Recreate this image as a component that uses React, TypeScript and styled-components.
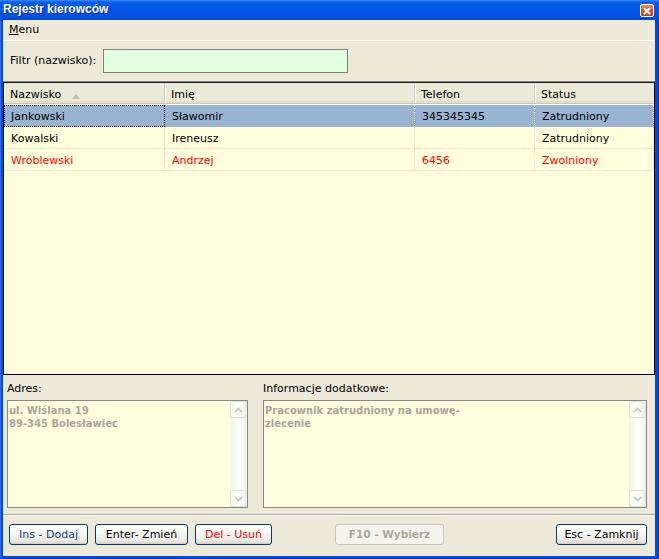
import React from 'react';
import styled, { createGlobalStyle } from 'styled-components';

const GlobalStyle = createGlobalStyle`
  html, body { margin: 0; padding: 0; background: #ece9d8; }
  body { font-family: "DejaVu Sans", Tahoma, sans-serif; font-size: 11px; color: #000; }
  * { box-sizing: border-box; }
`;

const Window = styled.div`
  width: 659px;
  height: 559px;
  display: flex;
  flex-direction: column;
  background: #0a48dc;
  box-shadow: inset 1px 0 0 #2a6cf0, inset -1px 0 0 #0831b0, inset 0 -1px 0 #0831b0;
  overflow: hidden;
`;

const TitleBar = styled.div`
  height: 20px;
  flex: none;
  display: flex;
  align-items: flex-start;
  justify-content: space-between;
  padding: 0 5px 0 3px;
  background: linear-gradient(180deg, #3d8ef8 0px, #0a5ee9 2px, #0055e5 40%, #0052e0 80%, #0046cc 100%);
`;

const TitleText = styled.span`
  padding-top: 2px;
  line-height: 18px;
  color: #fff;
  font: bold 12px "Liberation Sans", Arial, sans-serif;
  text-shadow: 1px 1px 0 #0b2a8c;
`;

const CloseButton = styled.div`
  margin-top: 4px;
  width: 14px;
  height: 13px;
  border: 1px solid #fff;
  border-radius: 2px;
  background: linear-gradient(180deg, #e98a64 0%, #d9552c 50%, #c2401a 100%);
  display: flex;
  align-items: center;
  justify-content: center;
`;

const Client = styled.div`
  flex: 1;
  margin: 0 4px 3px 3px;
  background: #ece9d8;
  display: flex;
  flex-direction: column;
  min-height: 0;
`;

const MenuBar = styled.div`
  height: 21px;
  flex: none;
  padding-left: 6px;
  line-height: 20px;
  border-bottom: 1px solid #fff;
`;

const Underline = styled.span`
  text-decoration: underline;
`;

const FilterRow = styled.div`
  height: 41px;
  flex: none;
  display: flex;
  align-items: center;
  padding: 0 0 0 7px;
  border-bottom: 1px solid #8e8b7c;
`;

const FilterLabel = styled.label`
  width: 93px;
  flex: none;
  line-height: 14px;
`;

const FilterInput = styled.div`
  width: 245px;
  height: 24px;
  margin-top: -1px;
  border: 1px solid #828282;
  background: #dfffdf;
`;

const Table = styled.div`
  height: 293px;
  flex: none;
  border: 1px solid #000;
  border-top-color: #1a1a1a;
  background: #ffffdd;
  display: grid;
  grid-template-columns: 161px 250px 120px 119px;
  grid-auto-rows: 22px;
  align-content: start;
`;

const HeaderCell = styled.div<{ $last?: boolean }>`
  height: 21px;
  padding: 4px 0 0 6px;
  line-height: 16px;
  background: #ebe9d8;
  border-bottom: 1px solid #cbc7b6;
  border-right: 1px solid ${p => (p.$last ? '#ebe9d8' : '#cdc9b9')};
  box-shadow: inset 1px 0 0 #fff, inset 0 -2px 0 #e2dec9;
  display: flex;
  align-items: flex-start;
  white-space: nowrap;
`;

const SortArrow = styled.svg`
  margin: 7px 0 0 11px;
`;

const Cell = styled.div<{ $selected?: boolean; $red?: boolean; $focus?: boolean }>`
  height: 22px;
  padding: 3px 0 0 7px;
  line-height: 18px;
  white-space: nowrap;
  overflow: hidden;
  color: ${p => (p.$red ? '#ff0000' : '#000')};
  background: ${p => (p.$selected ? '#99b4d1' : 'transparent')};
  border-bottom: 1px dotted ${p => (p.$selected ? '#99b4d1' : '#dcdac8')};
  border-right: 1px dotted ${p => (p.$selected ? '#ffffff' : '#dcdac8')};
  outline: ${p => (p.$focus ? '1px dotted #000' : 'none')};
  outline-offset: -1px;
`;

const BottomPanel = styled.div`
  flex: 1;
  display: flex;
  flex-direction: column;
`;

const Fields = styled.div`
  display: flex;
  padding: 0 8px 0 4px;
  gap: 15px;
`;

const Field = styled.div<{ $w: number }>`
  width: ${p => p.$w}px;
  display: flex;
  flex-direction: column;
`;

const FieldLabel = styled.div`
  height: 25px;
  padding-top: 7px;
  line-height: 14px;
`;

const Memo = styled.div`
  height: 108px;
  border: 1px solid #8a8a8a;
  background: #ffffdd;
  display: flex;
`;

const MemoText = styled.div`
  flex: 1;
  padding: 3px 0 0 1px;
  font: bold 10px "DejaVu Sans", Tahoma, sans-serif;
  line-height: 13px;
  color: #a8a69b;
  white-space: pre-wrap;
`;

const ScrollBar = styled.div`
  width: 17px;
  flex: none;
  display: flex;
  flex-direction: column;
  justify-content: space-between;
  background: linear-gradient(90deg, #f3f2ec 0%, #fefefb 50%, #f0efe7 100%);
`;

const ScrollButton = styled.div`
  width: 17px;
  height: 17px;
  border: 1px solid #e6e4d8;
  border-radius: 2px;
  background: linear-gradient(90deg, #f8f7f2 0%, #fdfdfb 50%, #efeee6 100%);
  display: flex;
  align-items: center;
  justify-content: center;
`;

const Separator = styled.div`
  margin-top: 6px;
  height: 2px;
  border-top: 1px solid #aca899;
  border-bottom: 1px solid #fff;
`;

const ButtonBar = styled.div`
  display: flex;
  align-items: flex-start;
  gap: 7px;
  padding: 8px 8px 0 6px;
`;

const Button = styled.button<{ $w: number; $color?: string; $gapLeft?: number }>`
  width: ${p => p.$w}px;
  height: 21px;
  margin-left: ${p => p.$gapLeft ?? 0}px;
  padding: 0;
  font: 11px "DejaVu Sans", Tahoma, sans-serif;
  line-height: 19px;
  color: ${p => p.$color ?? '#000'};
  border: 1px solid #003c74;
  border-radius: 3px;
  background: linear-gradient(180deg, #ffffff 0%, #f7f7f3 45%, #ecebe4 80%, #d8d4c8 100%);
  box-shadow: inset 0 -1px 0 #d6d0c4;
  &:disabled {
    color: #aca899;
    border-color: #c9c7ba;
    background: #f5f4ec;
    box-shadow: none;
    font-weight: bold;
    font-size: 10.5px;
  }
`;

const Spacer = styled.div`
  flex: 1;
`;

const Chevron = ({ up }: { up?: boolean }) => (
  <svg width="9" height="6" viewBox="0 0 9 6">
    <path d={up ? 'M1 5 L4.5 1.5 L8 5' : 'M1 1 L4.5 4.5 L8 1'} fill="none" stroke="#c4c2b6" strokeWidth="1.6" />
  </svg>
);

const MemoBox = ({ text }: { text: string }) => (
  <Memo>
    <MemoText>{text}</MemoText>
    <ScrollBar>
      <ScrollButton><Chevron up /></ScrollButton>
      <ScrollButton><Chevron /></ScrollButton>
    </ScrollBar>
  </Memo>
);

type Row = { nazwisko: string; imie: string; telefon: string; status: string; red?: boolean };

const rows: Row[] = [
  { nazwisko: 'Jankowski', imie: 'Sławomir', telefon: '345345345', status: 'Zatrudniony' },
  { nazwisko: 'Kowalski', imie: 'Ireneusz', telefon: '', status: 'Zatrudniony' },
  { nazwisko: 'Wróblewski', imie: 'Andrzej', telefon: '6456', status: 'Zwolniony', red: true },
];

export default function App() {
  return (
    <>
      <GlobalStyle />
      <Window>
        <TitleBar>
          <TitleText>Rejestr kierowców</TitleText>
          <CloseButton>
            <svg width="8" height="8" viewBox="0 0 8 8">
              <path d="M1 1 L7 7 M7 1 L1 7" stroke="#fff" strokeWidth="2" />
            </svg>
          </CloseButton>
        </TitleBar>
        <Client>
          <MenuBar>
            <Underline>M</Underline>enu
          </MenuBar>
          <FilterRow>
            <FilterLabel>Filtr (nazwisko):</FilterLabel>
            <FilterInput />
          </FilterRow>
          <Table>
            <HeaderCell>
              Nazwisko
              <SortArrow width="8" height="5" viewBox="0 0 8 5">
                <path d="M0 5 L4 0 L8 5 Z" fill="#bdbab0" />
              </SortArrow>
            </HeaderCell>
            <HeaderCell>Imię</HeaderCell>
            <HeaderCell>Telefon</HeaderCell>
            <HeaderCell $last>Status</HeaderCell>
            {rows.map((r, i) => {
              const sel = i === 0;
              return (
                <React.Fragment key={r.nazwisko}>
                  <Cell $selected={sel} $focus={sel} $red={r.red}>{r.nazwisko}</Cell>
                  <Cell $selected={sel} $red={r.red}>{r.imie}</Cell>
                  <Cell $selected={sel} $red={r.red}>{r.telefon}</Cell>
                  <Cell $selected={sel} $red={r.red}>{r.status}</Cell>
                </React.Fragment>
              );
            })}
          </Table>
          <BottomPanel>
            <Fields>
              <Field $w={241}>
                <FieldLabel>Adres:</FieldLabel>
                <MemoBox text={'ul. Wiślana 19\n89-345 Bolesławiec'} />
              </Field>
              <Field $w={384}>
                <FieldLabel>Informacje dodatkowe:</FieldLabel>
                <MemoBox text={'Pracownik zatrudniony na umowę-\nzlecenie'} />
              </Field>
            </Fields>
            <Separator />
            <ButtonBar>
              <Button $w={79} $color="#0b3d8c">Ins - Dodaj</Button>
              <Button $w={93}>Enter- Zmień</Button>
              <Button $w={77} $color="#ff0000">Del - Usuń</Button>
              <Button $w={109} $gapLeft={56} disabled>F10 - Wybierz</Button>
              <Spacer />
              <Button $w={91}>Esc - Zamknij</Button>
            </ButtonBar>
          </BottomPanel>
        </Client>
      </Window>
    </>
  );
}
